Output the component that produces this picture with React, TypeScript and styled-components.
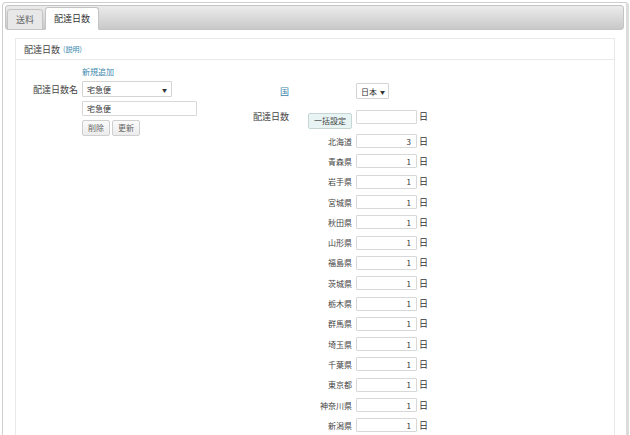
import styled, { createGlobalStyle } from "styled-components";

const GlobalStyle = createGlobalStyle`
  html, body {
    margin: 0;
    padding: 0;
    background: #fff;
  }
  body {
    font-family: "Noto Sans CJK JP", "Noto Sans", sans-serif;
    color: #333;
  }
  * {
    box-sizing: border-box;
  }
`;

const Tabs = styled.div`
  margin: 2px 0 0 2px;
  width: 627px;
  height: 440px;
  padding: 2px;
  border: 1px solid #cfcfcf;
  border-right: 3px solid #dcdcdc;
  border-radius: 4px 4px 0 0;
  overflow: hidden;
`;

const TabBar = styled.div`
  display: flex;
  align-items: flex-end;
  gap: 2px;
  height: 25px;
  padding: 0 0 0 1px;
  background: linear-gradient(#ebebeb, #c9c9c9);
  border: 1px solid #c4c4c4;
  border-radius: 3px;
`;

const Tab = styled.div<{ $active?: boolean }>`
  display: flex;
  align-items: center;
  height: ${({ $active }) => ($active ? "23px" : "21px")};
  margin-bottom: -1px;
  padding: 0 8px;
  font-size: 9px;
  color: ${({ $active }) => ($active ? "#333" : "#666")};
  background: ${({ $active }) => ($active ? "#fff" : "#e8e8e8")};
  border: 1px solid #c4c4c4;
  border-bottom: ${({ $active }) => ($active ? "1px solid #fff" : "1px solid #c4c4c4")};
  border-radius: 3px 3px 0 0;
`;

const TabPanel = styled.div`
  padding: 8px 9px 0 10px;
`;

const Panel = styled.div`
  border: 1px solid #e9e9e9;
  height: 420px;
`;

const PanelHeader = styled.div`
  display: flex;
  align-items: center;
  height: 21px;
  padding: 0 8px;
  border-bottom: 1px solid #e9e9e9;
  font-size: 9px;
  color: #444;
`;

const Note = styled.a`
  margin-left: 3px;
  font-size: 7px;
  color: #3a87ad;
`;

const Body = styled.div`
  display: grid;
  grid-template-columns: 230px auto;
  padding-top: 6px;
`;

const LeftForm = styled.div`
  display: grid;
  grid-template-columns: 62px auto;
  column-gap: 4px;
  align-content: start;
  align-items: center;
`;

const Label = styled.div<{ $size?: number }>`
  text-align: right;
  font-size: ${({ $size }) => $size ?? 9}px;
  color: #444;
  white-space: nowrap;
`;

const Link = styled.a<{ $size?: number }>`
  font-size: ${({ $size }) => $size ?? 8}px;
  line-height: 12px;
  color: #3a87ad;
  margin-bottom: 3px;
`;

const SelectBox = styled.div<{ $width: number; $tight?: boolean }>`
  display: flex;
  align-items: center;
  justify-content: ${({ $tight }) => ($tight ? "flex-start" : "space-between")};
  gap: 3px;
  width: ${({ $width }) => $width}px;
  height: 16px;
  padding: 0 4px;
  font-size: 8px;
  white-space: nowrap;
  color: #333;
  background: #fff;
  border: 1px solid #d4d4d4;
  border-radius: 1px;
`;

const Caret = styled.span`
  font-size: 5px;
  color: #333;
`;

const TextInput = styled.input<{ $width: number; $align?: string }>`
  display: block;
  width: ${({ $width }) => $width}px;
  height: 15px;
  margin: 0;
  padding: 0 5px 0 4px;
  font-family: inherit;
  font-size: 8px;
  color: #333;
  text-align: ${({ $align }) => $align ?? "left"};
  background: #fff;
  border: 1px solid #d8d8d8;
  border-radius: 1px;
  outline: none;
`;

const ButtonRow = styled.div`
  display: flex;
  gap: 2px;
  margin-top: 4px;
`;

const Button = styled.button<{ $tint?: boolean }>`
  height: 16px;
  padding: 0 5px;
  font-family: inherit;
  font-size: 8px;
  line-height: 1;
  color: ${({ $tint }) => ($tint ? "#444" : "#666")};
  background: ${({ $tint }) =>
    $tint ? "#e8f4f3" : "linear-gradient(#fafafa, #ececec)"};
  border: 1px solid ${({ $tint }) => ($tint ? "#c6d6d5" : "#cfcfcf")};
  border-radius: 2px;
`;

const RightForm = styled.div`
  display: flex;
  flex-direction: column;
  margin-top: 17px;
`;

const Row = styled.div<{ $height: number; $gap?: number; $top?: boolean }>`
  display: grid;
  grid-template-columns: 43px 67px 61px auto;
  align-items: ${({ $top }) => ($top ? "start" : "center")};
  height: ${({ $height }) => $height}px;
  margin-bottom: ${({ $gap }) => $gap ?? 0}px;
`;

const SpanLabel = styled(Label)`
  grid-column: 1 / span 2;
  padding-right: 4px;
  font-size: 8px;
`;

const ButtonCell = styled.div`
  display: flex;
  justify-content: flex-end;
  padding: 3px 4px 0 0;
`;

const Unit = styled.span`
  padding-left: 2px;
  font-size: 9px;
  color: #333;
`;

const DayInput = styled(TextInput)`
  height: 14px;
`;

const prefectures: [string, number][] = [
  ["北海道", 3],
  ["青森県", 1],
  ["岩手県", 1],
  ["宮城県", 1],
  ["秋田県", 1],
  ["山形県", 1],
  ["福島県", 1],
  ["茨城県", 1],
  ["栃木県", 1],
  ["群馬県", 1],
  ["埼玉県", 1],
  ["千葉県", 1],
  ["東京都", 1],
  ["神奈川県", 1],
  ["新潟県", 1],
];

export default function App() {
  return (
    <>
      <GlobalStyle />
      <Tabs>
        <TabBar>
          <Tab>送料</Tab>
          <Tab $active>配達日数</Tab>
        </TabBar>
        <TabPanel>
          <Panel>
            <PanelHeader>
              配達日数<Note>(説明)</Note>
            </PanelHeader>
            <Body>
              <LeftForm>
                <span />
                <Link>新規追加</Link>
                <Label>配達日数名</Label>
                <SelectBox $width={90}>
                  宅急便<Caret>▼</Caret>
                </SelectBox>
                <span />
                <div style={{ marginTop: 4 }}>
                  <TextInput $width={115} readOnly defaultValue="宅急便" />
                </div>
                <span />
                <ButtonRow>
                  <Button>削除</Button>
                  <Button>更新</Button>
                </ButtonRow>
              </LeftForm>
              <RightForm>
                <Row $height={16} $gap={11}>
                  <Label>
                    <Link $size={9}>国</Link>
                  </Label>
                  <span />
                  <SelectBox $width={33} $tight>
                    日本<Caret>▼</Caret>
                  </SelectBox>
                </Row>
                <Row $height={21} $top>
                  <Label style={{ lineHeight: "13px" }}>配達日数</Label>
                  <ButtonCell>
                    <Button $tint>一括設定</Button>
                  </ButtonCell>
                  <DayInput $width={61} readOnly defaultValue="" />
                  <Unit>日</Unit>
                </Row>
                {prefectures.map(([name, days]) => (
                  <Row key={name} $height={20.3}>
                    <SpanLabel>{name}</SpanLabel>
                    <DayInput
                      $width={61}
                      $align="right"
                      readOnly
                      defaultValue={String(days)}
                    />
                    <Unit>日</Unit>
                  </Row>
                ))}
              </RightForm>
            </Body>
          </Panel>
        </TabPanel>
      </Tabs>
    </>
  );
}
